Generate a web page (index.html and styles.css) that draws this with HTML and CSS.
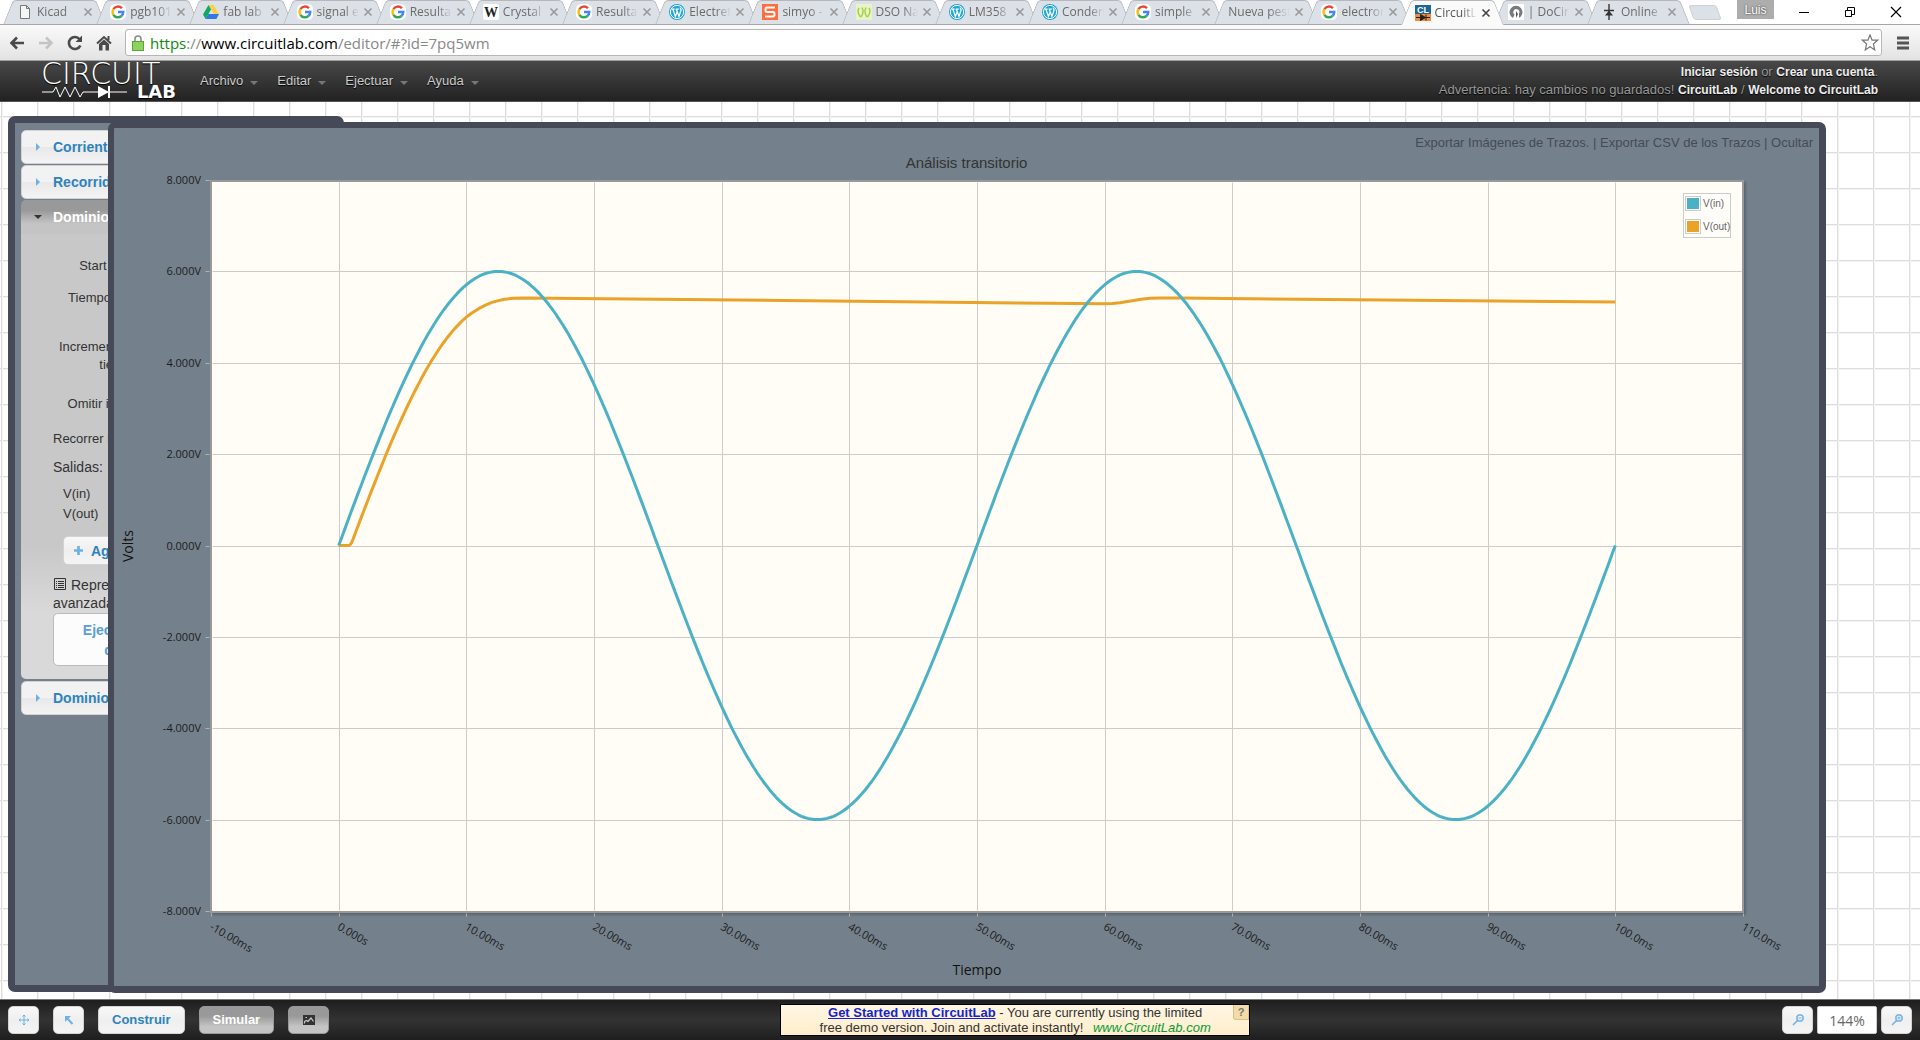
FILE: index.html
```html
<!DOCTYPE html>
<html lang="es">
<head>
  <meta charset="UTF-8">
  <meta name="viewport" content="width=device-width, initial-scale=1.0">
  <title>CircuitLab</title>
  <link rel="stylesheet" href="styles.css">
</head>
<body>
  <!-- icons used more than once -->
  <svg class="sprite" aria-hidden="true">
    <symbol id="google" viewBox="0 0 16 16">
      <rect width="16" height="16" rx="5" fill="#fff"/>
      <g fill="none" stroke-width="2.4">
        <path d="M3.4 5.2A5.3 5.3 0 0 1 11.9 4.3" stroke="#ea4335"/>
        <path d="M3.4 5.2a5.3 5.3 0 0 0 0 5.6" stroke="#fbbc05"/>
        <path d="M3.4 10.8a5.3 5.3 0 0 0 8 1.2" stroke="#34a853"/>
        <path d="M11.4 12a5.3 5.3 0 0 0 1.9-4H8" stroke="#4285f4"/>
      </g>
    </symbol>
    <symbol id="wordpress" viewBox="0 0 16 16">
      <circle cx="8" cy="8" r="8" fill="#1fa8d8"/>
      <circle cx="8" cy="8" r="6.6" fill="none" stroke="#fff"/>
      <path d="M2.6 5.2h3M6.6 5.2h3.2M3.9 5.4l2.5 7L8 8.2M7.4 5.4l2.6 7 2-6c.4-1.4-1-1.6-.6-2.8" fill="none" stroke="#fff" stroke-width="1.3"/>
    </symbol>
    <symbol id="close" viewBox="0 0 10 10">
      <path d="M1.5 1.5l7 7M8.5 1.5l-7 7" fill="none" stroke="currentColor" stroke-width="1.6"/>
    </symbol>
    <symbol id="lens" viewBox="0 0 12 12">
      <path d="M5 2.5L6.500 1h3L11 2.500v3L9.500 7h-3L5 5.500zM5.500 6.500L1 11" fill="none" stroke="#6eb0e6" stroke-width="1.5"/>
    </symbol>
  </svg>

  <div class="browser">
    <div class="tabstrip">
      <ul class="tabs">
        <li class="tab"><svg viewBox="0 0 16 16"><path d="M3.500 1.500h6l3 3v10h-9zM9.500 1.500v3h3" fill="#f4f5f7" stroke="#777"/></svg><span>Kicad</span><button aria-label="Cerrar"><svg><use href="#close"/></svg></button></li>
        <li class="tab"><svg><use href="#google"/></svg><span>pgb101</span><button aria-label="Cerrar"><svg><use href="#close"/></svg></button></li>
        <li class="tab"><svg viewBox="0 0 16 16"><path d="M5.500 1h5L16 10h-5z" fill="#ffcf48"/><path d="M5.500 1L0 10.500 2.600 15 8 5.500z" fill="#11a861"/><path d="M5.300 10H16l-2.600 5H2.600z" fill="#3777e3"/></svg><span>fab lab</span><button aria-label="Cerrar"><svg><use href="#close"/></svg></button></li>
        <li class="tab"><svg><use href="#google"/></svg><span>signal e</span><button aria-label="Cerrar"><svg><use href="#close"/></svg></button></li>
        <li class="tab"><svg><use href="#google"/></svg><span>Resultad</span><button aria-label="Cerrar"><svg><use href="#close"/></svg></button></li>
        <li class="tab"><svg viewBox="0 0 16 16"><rect width="16" height="16" rx="2" fill="#fff"/><text class="wiki" x="8" y="13" text-anchor="middle">W</text></svg><span>Crystal o</span><button aria-label="Cerrar"><svg><use href="#close"/></svg></button></li>
        <li class="tab"><svg><use href="#google"/></svg><span>Resultad</span><button aria-label="Cerrar"><svg><use href="#close"/></svg></button></li>
        <li class="tab"><svg><use href="#wordpress"/></svg><span>Electret</span><button aria-label="Cerrar"><svg><use href="#close"/></svg></button></li>
        <li class="tab"><svg viewBox="0 0 16 16"><rect width="16" height="16" fill="#ff6c3d"/><path d="M13 3.500H5Q3.500 3.500 3.500 5.700T5 8h6q1.500 0 1.500 2.300T11 12.500H3" fill="none" stroke="#fff" stroke-width="2"/></svg><span>simyo -</span><button aria-label="Cerrar"><svg><use href="#close"/></svg></button></li>
        <li class="tab"><svg viewBox="0 0 16 16"><rect width="16" height="16" fill="#e8f3c8"/><path d="M3 4q-2.500 4 1.500 9M6 3.500q2.500 5-1 9.500M13 4q2.500 4-1.500 9M10 3.500q-2.500 5 1 9.500" fill="none" stroke="#a9cf45" stroke-width="1.500"/></svg><span>DSO Na</span><button aria-label="Cerrar"><svg><use href="#close"/></svg></button></li>
        <li class="tab"><svg><use href="#wordpress"/></svg><span>LM358</span><button aria-label="Cerrar"><svg><use href="#close"/></svg></button></li>
        <li class="tab"><svg><use href="#wordpress"/></svg><span>Conden</span><button aria-label="Cerrar"><svg><use href="#close"/></svg></button></li>
        <li class="tab"><svg><use href="#google"/></svg><span>simple</span><button aria-label="Cerrar"><svg><use href="#close"/></svg></button></li>
        <li class="tab"><span>Nueva pest</span><button aria-label="Cerrar"><svg><use href="#close"/></svg></button></li>
        <li class="tab"><svg><use href="#google"/></svg><span>electron</span><button aria-label="Cerrar"><svg><use href="#close"/></svg></button></li>
        <li class="tab active"><svg viewBox="0 0 16 16"><rect width="16" height="10" fill="#1b6598"/><rect y="9" width="16" height="7" fill="#f08a3c"/><text class="cl" x="8" y="8" text-anchor="middle">CL</text><path d="M1 12.500h14M5.500 9.500v6l5-3zM11 9.500v6" fill="#222" stroke="#222"/></svg><span>CircuitL</span><button aria-label="Cerrar"><svg><use href="#close"/></svg></button></li>
        <li class="tab"><svg viewBox="0 0 16 16"><rect width="16" height="16" fill="#fff"/><path d="M5 14a6.500 6.500 0 1 1 6 0V9.500a3 3 0 1 0-4.500 1z" fill="#777b7f"/><path d="M8 7l2 3-2 4z" fill="#555"/></svg><span>| DoCirc</span><button aria-label="Cerrar"><svg><use href="#close"/></svg></button></li>
        <li class="tab"><svg viewBox="0 0 16 16"><path d="M8 0v16M3 6.500h10" stroke="#333" stroke-width="1.400"/><path d="M8 6.500l4 5H4z" fill="#333"/></svg><span>Online</span><button aria-label="Cerrar"><svg><use href="#close"/></svg></button></li>
      </ul>
      <div class="window-controls">
        <button class="new-tab" aria-label="Nueva pestaña"></button>
        <button class="user">Luis</button>
        <button class="win" aria-label="Minimizar"><svg viewBox="0 0 12 12"><path d="M1 6.500h10" stroke="#000"/></svg></button>
        <button class="win" aria-label="Restaurar"><svg viewBox="0 0 12 12"><path d="M1.500 4.500h6v6h-6zM3.500 4.500v-3h7v7h-3" fill="none" stroke="#000"/></svg></button>
        <button class="win" aria-label="Cerrar ventana"><svg viewBox="0 0 12 12"><path d="M1 1l10 10M11 1L1 11" stroke="#000" stroke-width="1.200"/></svg></button>
      </div>
    </div>
    <div class="toolbar">
      <button aria-label="Atrás"><svg viewBox="0 0 16 16"><path d="M15 8H3M8 2.500L2.500 8 8 13.500" fill="none" stroke="#4a4a4a" stroke-width="2.600"/></svg></button>
      <button aria-label="Adelante"><svg viewBox="0 0 16 16"><path d="M1 8h12M8 2.500L13.500 8 8 13.500" fill="none" stroke="#c4c4c4" stroke-width="2.600"/></svg></button>
      <button aria-label="Recargar"><svg viewBox="0 0 16 16"><path d="M12.600 4.200a6 6 0 1 0 .8 6.300" fill="none" stroke="#4a4a4a" stroke-width="2.600"/><path d="M15 .5v6.500H8.500z" fill="#4a4a4a"/></svg></button>
      <button aria-label="Inicio"><svg viewBox="0 0 16 16"><path d="M1 8.500L8 2l7 6.500M12.500 1v4" fill="none" stroke="#4a4a4a" stroke-width="2"/><path d="M3 9l5-4.500L13 9v6.500h-3.500V10h-3v5.500H3z" fill="#4a4a4a"/></svg></button>
      <div class="omnibox">
        <svg viewBox="0 0 12 16"><path d="M3 7V4a3 3 0 0 1 6 0v3" fill="none" stroke="#8a8a8a" stroke-width="1.600"/><rect x=".5" y="6.500" width="11" height="9" fill="#8bd25f" stroke="#5aa53a"/></svg>
        <a class="url" href="#"><span class="secure">https</span>://<span class="host">www.circuitlab.com</span>/editor/#?id=7pq5wm</a>
        <button aria-label="Marcar"><svg viewBox="0 0 18 18"><path d="M9 1l2.100 5.200h5.400L12.400 10l1.300 6L9 12.800 4.300 16l1.300-6-4.100-3.800h5.400z" fill="none" stroke="#777" stroke-width="1.200"/></svg></button>
      </div>
      <button aria-label="Menú"><svg viewBox="0 0 16 16"><path d="M2 3h12M2 8h12M2 13h12" stroke="#555" stroke-width="3"/></svg></button>
    </div>
  </div>

  <header class="app-header">
    <a class="logo" href="#" aria-label="CircuitLab">
      <svg viewBox="0 0 136 38">
        <text class="logo-thin" x="0" y="22">CIRCUIT</text>
        <path d="M1 30h11l3-5 4 10 5-10 5 10 5-10 5 10 3-5h44" fill="none" stroke="#fff"/>
        <path d="M57 24v12l11-6zM67 24h2v12h-2z" fill="#fff"/>
        <text class="logo-bold" x="135" y="36" text-anchor="end">LAB</text>
      </svg>
    </a>
    <nav class="menu">
      <button>Archivo</button>
      <button>Editar</button>
      <button>Ejectuar</button>
      <button>Ayuda</button>
    </nav>
    <div class="account">
      <div><a href="#">Iniciar sesión</a> or <a href="#">Crear una cuenta</a>.</div>
      <div>Advertencia: hay cambios no guardados! <a href="#">CircuitLab</a> / <a href="#">Welcome to CircuitLab</a></div>
    </div>
  </header>

  <main class="canvas">
    <section class="panel simulation">
      <button class="section-title">Corriente Continua</button>
      <button class="section-title">Recorrido de DC</button>
      <button class="section-title open">Dominio del Tiempo</button>
      <form class="section-body">
        <div class="field"><label for="start">Start Time:</label><input id="start" type="text" value="0"></div>
        <div class="field"><label for="stop">Tiempo final:</label><input id="stop" type="text" value="100m"></div>
        <div class="field tall"><label for="step">Incremento de tiempo:</label><input id="step" type="text" value="0.1m"></div>
        <div class="field"><label for="skip">Omitir inicial:</label><input id="skip" type="checkbox"></div>
        <p class="sweep">Recorrer los parámetros</p>
        <p class="outputs">Salidas:</p>
        <ul class="signals">
          <li>V(in)</li>
          <li>V(out)</li>
        </ul>
        <button type="button" class="btn add"><svg viewBox="0 0 10 10"><path d="M5 0v10M0 5h10" stroke="#6eb0e6" stroke-width="3"/></svg>Agregar</button>
        <p class="advanced"><svg viewBox="0 0 12 12"><path d="M.5.5h11v11H.5zM2 3.500h1M2 5.500h1M2 7.500h1M2 9.500h1M4 3.500h6M4 5.500h6M4 7.500h6M4 9.500h6" fill="none" stroke="#333"/></svg>Representación<br>avanzada</p>
        <button type="button" class="btn run">Ejecutar simulación<br>de transitorio</button>
      </form>
      <button class="section-title">Dominio de Frecuencia</button>
    </section>

    <section class="panel results">
      <div class="actions"><a href="#">Exportar Imágenes de Trazos.</a> | <a href="#">Exportar CSV de los Trazos</a> | <a href="#">Ocultar</a></div>
      <h1>Análisis transitorio</h1>
      <svg id="plot" viewBox="0 0 1705 814"></svg>
    </section>
  </main>

  <footer class="bottom-bar">
    <div class="tools">
      <button class="btn" aria-label="Mover"><svg viewBox="0 0 12 12"><path d="M6 1v10M1 6h10M4.500 2.500L6 1l1.500 1.500M4.500 9.500L6 11l1.500-1.500M2.500 4.500L1 6l1.500 1.500M9.500 4.500L11 6 9.500 7.500" fill="none" stroke="#6eb0e6"/></svg></button>
      <button class="btn" aria-label="Seleccionar"><svg viewBox="0 0 12 12"><path d="M3 3l6.500 7" stroke="#6eb0e6" stroke-width="2"/><path d="M2 2h6L2 8z" fill="#6eb0e6"/></svg></button>
      <button class="btn text">Construir</button>
      <button class="btn text pressed">Simular</button>
      <button class="btn picture pressed" aria-label="Gráfica"><svg viewBox="0 0 12 12"><rect y="1" width="12" height="10" fill="#333"/><path d="M1.500 9.500V7.500l2-1 1.500 1 3-3.500 2.500 3.500M2.500 3.500h1.500" fill="none" stroke="#ccc" stroke-width="1.200"/></svg></button>
    </div>
    <div class="notice">
      <p><a href="#">Get Started with CircuitLab</a> - You are currently using the limited<br>free demo version. Join and activate instantly! <em>www.CircuitLab.com</em></p>
      <button class="help" aria-label="Ayuda">?</button>
    </div>
    <div class="zoom">
      <button class="btn" aria-label="Alejar"><svg viewBox="0 0 12 12"><use href="#lens"/><path d="M6.500 4h3" stroke="#6eb0e6"/></svg></button>
      <input type="text" value="144%" aria-label="Zoom">
      <button class="btn" aria-label="Acercar"><svg viewBox="0 0 12 12"><use href="#lens"/><path d="M6.500 4h3M8 2.500v3" stroke="#6eb0e6"/></svg></button>
    </div>
  </footer>

  <script src="plot.js"></script>
</body>
</html>
```
FILE: styles.css
```css
* {
  box-sizing: border-box;
}
body {
  margin: 0;
  height: 100vh;
  display: flex;
  flex-direction: column;
  overflow: hidden;
  font: 13px/18px "Liberation Sans", Arial, sans-serif;
  color: #333;
}
button {
  margin: 0;
  padding: 0;
  border: 0;
  background: none;
  font: inherit;
  color: inherit;
}
a {
  color: inherit;
  text-decoration: none;
}
p, ul {
  margin: 0;
  padding: 0;
  list-style: none;
}
svg {
  display: block;
  flex: none;
}
.sprite {
  position: absolute;
  width: 0;
  height: 0;
}

/* browser chrome */
.tabstrip {
  display: flex;
  height: 25px;
  padding-left: 8px;
  border-bottom: 1px solid #a4a6a9;
  background: #fff;
}
.tabs {
  display: flex;
  flex: 1;
  min-width: 0;
}
.tab {
  position: relative;
  z-index: 0;
  flex: 1 1 0;
  min-width: 0;
  display: flex;
  align-items: center;
  gap: 4px;
  height: 24px;
  padding: 0 8px 0 9px;
  font: 12px/18px "Open Sans", sans-serif;
  color: #6a6a6a;
}
.tab::before, .tab::after {
  content: "";
  position: absolute;
  z-index: -1;
  top: 0;
  bottom: 0;
  background: #dce0e7;
  border: 1px solid #b5b7bb;
  border-bottom: 0;
}
.tab::before {
  left: 0;
  right: 50%;
  border-right: 0;
  border-top-left-radius: 4px;
  transform: skewX(-22deg);
}
.tab::after {
  left: 40%;
  right: 0;
  border-left: 0;
  border-top-right-radius: 4px;
  transform: skewX(22deg);
}
.tab.active {
  z-index: 1;
  height: 25px;
  color: #555;
}
.tab.active::before, .tab.active::after {
  background: #fafafa;
}
.tab > svg {
  width: 16px;
  height: 16px;
}
.tab span {
  flex: 1;
  overflow: hidden;
  white-space: nowrap;
  -webkit-mask-image: linear-gradient(to right, #000 65%, transparent);
  mask-image: linear-gradient(to right, #000 65%, transparent);
}
.tab button {
  color: #999;
}
.tab button svg {
  width: 10px;
  height: 10px;
}
.tab.active button {
  color: #444;
}
.wiki {
  font: bold 14px "Liberation Serif", serif;
  fill: #222;
}
.cl {
  font: bold 9px "Liberation Sans", sans-serif;
  fill: #fff;
}
.window-controls {
  display: flex;
  align-items: center;
  width: 235px;
  padding-left: 6px;
}
.new-tab {
  width: 28px;
  height: 15px;
  margin-right: 18px;
  background: #dce0e7;
  border: 1px solid #cdd0d5;
  border-radius: 3px;
  transform: skewX(20deg);
}
.user {
  align-self: flex-start;
  width: 37px;
  height: 19px;
  margin-right: 7px;
  background: #adadad;
  color: #fff;
  font-size: 12px;
  text-shadow: 0 0 2px #222;
}
.win {
  width: 46px;
}
.win svg {
  width: 12px;
  height: 12px;
  margin: auto;
}
.toolbar {
  display: flex;
  align-items: center;
  gap: 13px;
  height: 36px;
  padding: 0 9px;
  background: linear-gradient(#fafafa, #e3e3e3);
  border-bottom: 1px solid #a0a0a0;
}
.toolbar > button svg {
  width: 16px;
  height: 16px;
}
.omnibox {
  flex: 1;
  display: flex;
  align-items: center;
  gap: 6px;
  height: 27px;
  padding: 0 4px 0 6px;
  background: #fff;
  border: 1px solid #b6b6b6;
  border-radius: 3px;
}
.omnibox > svg {
  width: 12px;
  height: 16px;
}
.omnibox button {
  margin-right: -2px;
}
.omnibox button svg {
  width: 18px;
  height: 18px;
}
.url {
  flex: 1;
  font: 15px/20px "Open Sans", sans-serif;
  color: #888;
}
.secure {
  color: #0a8a0a;
}
.host {
  color: #000;
}

/* header */
.app-header {
  display: flex;
  align-items: center;
  height: 41px;
  padding: 0 42px 0 41px;
  background: linear-gradient(#484848, #222);
  border-bottom: 1px solid #555;
  color: #999;
  text-shadow: 0 1px 1px #000;
}
.logo {
  margin-right: 23px;
}
.logo svg {
  width: 136px;
  height: 38px;
}
.logo-thin {
  font: 200 30px "DejaVu Sans", sans-serif;
  fill: #fff;
}
.logo-bold {
  font: bold 18px "DejaVu Sans", sans-serif;
  fill: #fff;
}
.menu {
  display: flex;
  flex: 1;
  gap: 19px;
  color: #ccc;
}
.menu button {
  display: flex;
  align-items: center;
  gap: 7px;
  text-shadow: inherit;
}
.menu button::after {
  content: "";
  margin-top: 4px;
  border: 4px solid transparent;
  border-top-color: #777;
  border-bottom: 0;
}
.account {
  text-align: right;
}
.account a {
  color: #eee;
  font-size: 12px;
  font-weight: bold;
}

/* workspace */
.canvas {
  position: relative;
  flex: 1;
  min-height: 0;
  background-color: #fff;
  background-image:
    linear-gradient(to right, #dedede 1px, #f3f3f3 1px, #f3f3f3 2px, transparent 2px),
    linear-gradient(#dedede 1px, #f3f3f3 1px, #f3f3f3 2px, transparent 2px);
  background-size: 36px 36px;
  background-position: 1px 14px;
}
.panel {
  position: absolute;
  overflow: hidden;
  background: #74818c;
  border: 6px solid #464958;
  border-radius: 7px;
}
.simulation {
  top: 14px;
  bottom: 7px;
  left: 8px;
  width: 336px;
  padding: 7px 6px;
  border-width: 7px;
}
.results {
  top: 20px;
  bottom: 6px;
  left: 108px;
  right: 94px;
  border-width: 6px 7px 7px 6px;
  display: flex;
  flex-direction: column;
}
.section-title {
  display: flex;
  align-items: center;
  width: 100%;
  height: 34px;
  margin-bottom: 1px;
  padding-left: 14px;
  border: 1px solid #d3d3d3;
  border-radius: 5px;
  background: linear-gradient(#f2f2f2 50%, #e8e8e8 50%, #f4f4f4);
  color: #2e83bd;
  font-size: 14px;
  font-weight: bold;
}
.section-title::before {
  content: "";
  margin-right: 13px;
  border: 4px solid transparent;
  border-left-color: #6eb0e6;
  border-right: 0;
}
.section-title.open {
  margin-bottom: 0;
  padding-left: 13px;
  border: 0;
  border-radius: 5px 5px 0 0;
  background: linear-gradient(#999 30%, #c4c4c4 70%);
  color: #fff;
}
.section-title.open::before {
  margin-right: 11px;
  border: 4px solid transparent;
  border-top-color: #333;
  border-bottom: 0;
}
.section-body {
  margin-bottom: 2px;
  padding: 16px 32px 13px;
  border-radius: 0 0 5px 5px;
  background: linear-gradient(#c8c8c8 70%, #d9d9d9 85%);
}
.field {
  display: flex;
  align-items: center;
  gap: 8px;
  height: 32px;
}
.field label {
  width: 89px;
  text-align: right;
}
.field input[type="text"] {
  width: 80px;
}
.field.tall {
  height: 64px;
  margin-top: 10px;
}
.sweep {
  margin: 10px 0;
}
.outputs, .advanced {
  font-size: 14px;
}
.signals {
  margin: 8px 0 12px;
  padding-left: 10px;
  line-height: 20px;
}
.advanced {
  margin: 11px 0 1px;
}
.advanced svg {
  display: inline-block;
  width: 12px;
  height: 12px;
  margin: 0 5px 0 1px;
}
.btn {
  border: 1px solid #d3d3d3;
  border-radius: 5px;
  background: linear-gradient(#f8f8f8, #efefef 50%, #f4f4f4);
  color: #2e83bd;
  font-weight: bold;
}
.btn.pressed {
  border-color: #999;
  background: linear-gradient(#999 35%, #c4c4c4 75%);
  color: #fff;
}
.add {
  display: flex;
  align-items: center;
  gap: 8px;
  height: 29px;
  margin-left: 10px;
  padding: 0 10px;
  font-size: 14px;
}
.add svg {
  width: 9px;
  height: 9px;
}
.run {
  width: 192px;
  height: 53px;
  background: #fcfcfc;
  border-color: #bbb;
  color: #5b9fd3;
  font-size: 14px;
  line-height: 20px;
}

/* results */
.actions {
  padding: 6px 6px 1px;
  text-align: right;
  line-height: 18px;
  color: #464958;
}
.results h1 {
  margin: 0;
  font-size: 15px;
  font-weight: normal;
  line-height: 19px;
  text-align: center;
}
#plot {
  flex: 1;
  min-height: 0;
  width: 100%;
}
.frame {
  fill: #fffdf6;
  stroke: #999;
  stroke-width: 2;
  filter: drop-shadow(2px 2px 1px #5a6670);
}
.grid {
  stroke: #ccc;
}
.tick {
  stroke: #b0b0b0;
}
.tick-label {
  font: 11px "Open Sans", sans-serif;
  fill: #1c1c1c;
}
.axis-label {
  font: 14px "Open Sans", sans-serif;
  fill: #111;
  text-anchor: middle;
}
.trace {
  fill: none;
  stroke-width: 3;
  stroke-linejoin: round;
}
.legend-box {
  fill: #fffdf9;
  stroke: #ccc;
}
.legend-text {
  font: 10px "Liberation Sans", sans-serif;
  fill: #666;
}

/* bottom bar */
.bottom-bar {
  display: flex;
  align-items: center;
  height: 41px;
  padding: 0 8px;
  background: linear-gradient(#1e1e1e, #333 50%, #1e1e1e);
  border-top: 1px solid #777;
}
.tools, .zoom {
  display: flex;
}
.tools {
  flex: 7 1 0;
  gap: 14px;
}
.zoom {
  flex: 6 1 0;
  justify-content: flex-end;
  gap: 4px;
}
.bottom-bar .btn {
  width: 31px;
  height: 28px;
}
.bottom-bar .btn svg {
  width: 12px;
  height: 12px;
  margin: auto;
}
.bottom-bar .btn.text {
  width: auto;
  padding: 0 13px;
}
.bottom-bar .btn.picture {
  width: 41px;
}
.zoom input {
  width: 60px;
  height: 28px;
  border: 1px solid #ccc;
  border-radius: 2px;
  font: 14px "Open Sans", sans-serif;
  color: #666;
  text-align: center;
}
.notice {
  position: relative;
  width: 470px;
  height: 32px;
  border: 1px solid #000;
  background: linear-gradient(#fff6e3, #ffeecb);
  text-align: center;
  line-height: 15px;
}
.notice a {
  color: #1525d0;
  font-weight: bold;
  text-decoration: underline;
}
.notice em {
  margin-left: 6px;
  color: #0a9a3a;
}
.help {
  position: absolute;
  top: 0;
  right: 0;
  width: 16px;
  height: 15px;
  background: #f3dca8;
  border: 1px solid #d9c08a;
  border-top: 0;
  border-radius: 0 0 0 3px;
  color: #777;
  font-size: 11px;
  font-weight: bold;
  line-height: 12px;
}
```
FILE: plot.js
```js
const plot = document.getElementById('plot');
const left = 97, right = 1629, top_ = 9, bottom = 740;
const x = ms => left + (ms + 10) * (right - left) / 120;
const y = v => bottom - 1 - (v + 8) * (bottom - top_) / 16;

function add(name, attrs, text) {
  const el = document.createElementNS('http://www.w3.org/2000/svg', name);
  for (const key in attrs) el.setAttribute(key, attrs[key]);
  if (text) el.textContent = text;
  plot.appendChild(el);
}

function line(cls, x1, y1, x2, y2) {
  add('path', { class: cls, d: `M${Math.round(x1) + 0.5} ${Math.round(y1) + 0.5}L${Math.round(x2) + 0.5} ${Math.round(y2) + 0.5}` });
}

add('rect', { class: 'frame', x: left, y: top_, width: right - left, height: bottom - top_ });

for (let v = -8; v <= 8; v += 2) {
  if (Math.abs(v) < 8) line('grid', left + 1, y(v), right - 2, y(v));
  line('tick', left - 6, y(v), left - 2, y(v));
  add('text', { class: 'tick-label', x: left - 10, y: y(v) + 4, 'text-anchor': 'end' }, v.toFixed(3) + 'V');
}

const labels = ['-10.00ms', '0.000s', '10.00ms', '20.00ms', '30.00ms', '40.00ms', '50.00ms', '60.00ms', '70.00ms', '80.00ms', '90.00ms', '100.0ms', '110.0ms'];
labels.forEach((label, i) => {
  const px = x(i * 10 - 10);
  if (i > 0 && i < 12) line('grid', px, top_ + 1, px, bottom - 2);
  line('tick', px, bottom + 1, px, bottom + 4);
  add('text', { class: 'tick-label', transform: `translate(${px - 2} ${bottom + 17}) rotate(30)` }, label);
});

add('text', { class: 'axis-label', x: (left + right) / 2, y: 803 }, 'Tiempo');
add('text', { class: 'axis-label', transform: 'translate(19 374) rotate(-90)' }, 'Volts');

// rectifier: output follows the input minus the diode drop, then holds
const vin = t => 6 * Math.sin(2 * Math.PI * t / 50);
const input = [], output = [];
for (let t = 0; t <= 100; t += 0.25) input.push([t, vin(t)]);
for (let t = 0; t <= 10.5; t += 0.125) output.push([t, 0.04 * Math.log(1 + Math.exp((vin(t) - 0.71) / 0.04))]);
output.push([11, 5.19], [11.5, 5.26], [12, 5.32], [12.5, 5.36], [13, 5.39], [13.7, 5.41], [14.5, 5.42],
  [60, 5.29], [60.6, 5.3], [61.2, 5.315], [61.8, 5.34], [62.4, 5.37], [63, 5.395], [63.6, 5.41], [64.4, 5.415], [66, 5.415], [100, 5.33]);

const trace = (points, color) => add('path', {
  class: 'trace', stroke: color,
  d: 'M' + points.map(p => x(p[0]).toFixed(1) + ' ' + y(p[1]).toFixed(1)).join('L')
});
trace(output, '#eaa228');
trace(input, '#4bb2c5');

add('rect', { class: 'legend-box', x: 1569.5, y: 21.5, width: 47, height: 44 });
[['V(in)', '#4bb2c5'], ['V(out)', '#eaa228']].forEach(([name, color], i) => {
  const ly = 24.5 + i * 23;
  add('rect', { class: 'legend-box', x: 1571.5, y: ly, width: 15, height: 14 });
  add('rect', { fill: color, x: 1573, y: ly + 1.5, width: 12, height: 11 });
  add('text', { class: 'legend-text', x: 1589, y: ly + 10 }, name);
});
```
